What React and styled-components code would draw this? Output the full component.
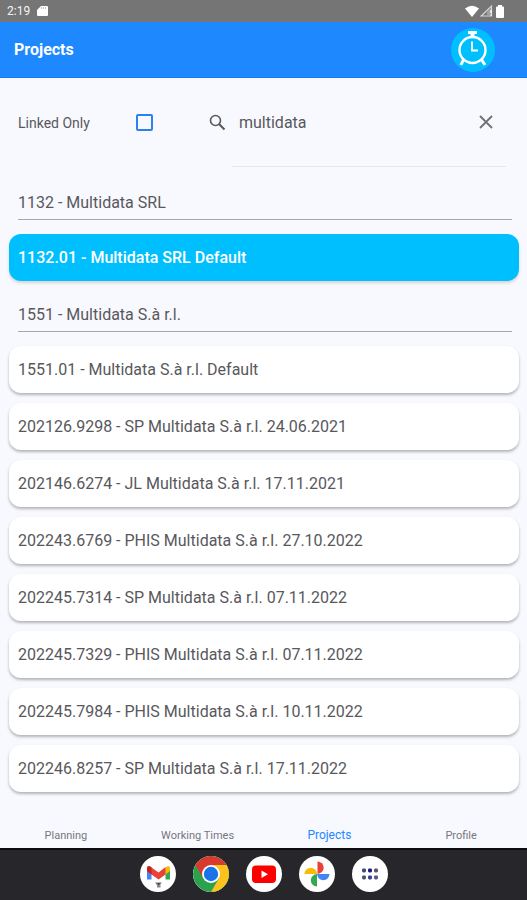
import React, { useState } from "react";
import styled, { createGlobalStyle } from "styled-components";

const GlobalStyle = createGlobalStyle`
  * { box-sizing: border-box; }
  body {
    margin: 0;
    background: #f8f9ff;
    color: #58585c;
    font-family: Roboto, "Liberation Sans", sans-serif;
    font-size: 16px;
  }
  button, input { font: inherit; color: inherit; }
`;

const Page = styled.div`
  display: flex;
  flex-direction: column;
  min-height: 100vh;
`;

const StatusBar = styled.div`
  display: flex;
  align-items: center;
  gap: 7px;
  height: 22px;
  padding: 0 22px 0 7px;
  background: #757575;
  color: #f4f4f4;
  font-size: 12px;
`;

const StatusIcons = styled.div`
  display: flex;
  align-items: center;
  gap: 1px;
  margin-left: auto;
`;

const AppBar = styled.header`
  display: flex;
  align-items: center;
  justify-content: space-between;
  height: 56px;
  padding: 0 32px 0 14px;
  background: #1e88ff;
  border-bottom: 1px solid #0f7df5;
  color: #fff;
`;

const Title = styled.h1`
  margin: 0;
  font-size: 16px;
  line-height: 20px;
  font-weight: 700;
`;

const ClockButton = styled.button`
  display: grid;
  place-items: center;
  width: 44px;
  height: 44px;
  padding: 0;
  border: 0;
  border-radius: 50%;
  background: #00bfff;
  color: #fff;
`;

const Filters = styled.div`
  display: flex;
  align-items: flex-start;
  padding: 0 21px 12px 18px;
`;

const LinkedLabel = styled.label`
  display: flex;
  align-items: center;
  justify-content: space-between;
  width: 135px;
  height: 89px;
  font-size: 14px;
`;

const CheckBox = styled.input`
  appearance: none;
  width: 17px;
  height: 17px;
  margin: 0;
  border: 2px solid #2f7fee;
  border-radius: 2px;
  background: #f8f9ff;
  &:checked { background: #2f7fee; }
`;

const SearchField = styled.label`
  display: flex;
  flex: 1;
  align-items: flex-start;
  gap: 6px;
  margin-left: 56px;
  min-width: 0;

  > svg { margin-top: 36px; }
`;

const SearchBox = styled.span`
  display: flex;
  flex: 1;
  align-items: center;
  min-width: 0;
  height: 89px;
  padding: 0 11px 0 7px;
  border-bottom: 1px solid #e4e6ec;
`;

const SearchInput = styled.input`
  flex: 1;
  min-width: 0;
  padding: 0;
  border: 0;
  outline: 0;
  background: transparent;
`;

const ClearButton = styled.button`
  display: grid;
  place-items: center;
  width: 18px;
  height: 18px;
  padding: 0;
  border: 0;
  background: transparent;
  color: #707074;
`;

const ProjectList = styled.main`
  display: flex;
  flex: 1;
  flex-direction: column;
  gap: 10px;
  padding: 0 8px 28px 9px;
`;

const GroupHeading = styled.h2`
  margin: 0 7px 4px 9px;
  padding: 14px 0 6px;
  border-bottom: 1px solid #a6a8ad;
  font-size: 16px;
  line-height: 20px;
  font-weight: 400;
`;

const ProjectCard = styled.button`
  height: 47px;
  padding: 0 9px;
  border: 0;
  border-radius: 12px;
  background: ${(p) => (p.$active ? "#00bfff" : "#fff")};
  color: ${(p) => (p.$active ? "#fff" : "inherit")};
  font-weight: ${(p) => (p.$active ? 500 : 400)};
  text-align: left;
  box-shadow: 0 2px 3px ${(p) => (p.$active ? "#00000026" : "#00000047")};
`;

const Tabs = styled.nav`
  display: grid;
  grid-template-columns: repeat(4, 1fr);
  height: 26px;
`;

const Tab = styled.a`
  display: grid;
  place-items: center;
  color: ${(p) => (p.$active ? "#1e88ff" : "#77777b")};
  font-size: ${(p) => (p.$active ? "12px" : "11px")};
  text-decoration: none;
`;

const Dock = styled.div`
  display: flex;
  align-items: center;
  justify-content: center;
  gap: 17px;
  height: 52px;
  background: #26262b;
  box-shadow: inset 0 2px #0c0c10;
`;

const DockButton = styled.button`
  display: grid;
  place-items: center;
  width: 36px;
  height: 36px;
  padding: 0;
  border: 0;
  border-radius: 50%;
  background: #fff;
  overflow: hidden;
`;

const SdCard = () => (
  <svg width="11" height="12" viewBox="0 0 11 12" aria-hidden="true">
    <path d="M4 1h6q1 0 1 1v8q0 1-1 1H1q-1 0-1-1V5z" fill="#fff" />
    <path d="M4.5 2v2M6.5 2v2M8.5 2v2" stroke="#a8a8a8" strokeWidth=".7" />
  </svg>
);

const Wifi = () => (
  <svg width="14" height="12" viewBox="0 0 14 12" aria-hidden="true">
    <path d="M0 3.4Q7-2 14 3.4L7 12z" fill="#fff" />
  </svg>
);

const Signal = () => (
  <svg width="13" height="12" viewBox="0 0 13 12" aria-hidden="true">
    <path d="M1.2 11 11.5 1v10z" fill="none" stroke="#d6d6d6" strokeWidth="1.2" />
    <path d="M7 7v4h4V2z" fill="#a2a2a2" />
    <path d="M11 5v3M11 9.5v1.3" stroke="#fff" strokeWidth="1.3" />
  </svg>
);

const Battery = () => (
  <svg width="11" height="13" viewBox="0 0 11 13" aria-hidden="true">
    <path d="M4 0h4v1.500h1q1 0 1 1V12q0 1-1 1H3q-1 0-1-1V2.500q0-1 1-1h1z" fill="#fff" />
  </svg>
);

const AlarmClock = () => (
  <svg width="44" height="44" viewBox="0 0 44 44" fill="none" stroke="#fff" aria-hidden="true">
    <circle cx="21.500" cy="22" r="13" strokeWidth="2.400" />
    <path d="M17 4.500h9" strokeWidth="3" />
    <path d="M21.500 4v5" strokeWidth="4" />
    <path d="M12.500 31.500 10 37M30.500 31.500l3.500 5.500" strokeWidth="3" />
    <path d="M21 13.500v9h6" strokeWidth="1.800" />
  </svg>
);

const Magnifier = () => (
  <svg width="17" height="17" viewBox="0 0 17 17" fill="none" stroke="#58585c" aria-hidden="true">
    <circle cx="6.500" cy="6.500" r="5" strokeWidth="1.600" />
    <path d="m10.200 10.200 5.300 5.300" strokeWidth="2" />
  </svg>
);

const Cross = () => (
  <svg width="14" height="14" viewBox="0 0 14 14" stroke="currentColor" strokeWidth="1.800" aria-hidden="true">
    <path d="m1 1 12 12M13 1 1 13" />
  </svg>
);

const Gmail = () => (
  <svg width="36" height="36" viewBox="0 0 36 36" aria-hidden="true">
    <path d="M7 12v11.500h4.500V13z" fill="#4285f4" />
    <path d="M25.500 13v10.500H30V12z" fill="#34a853" />
    <path d="M25.500 11.500 28 10q2 0 2 2v3l-4.500 3.500z" fill="#fbbc04" />
    <path d="M7 12q0-2 2.500-2l9 6.500 7-5.500v7.500l-7 5-7-5L7 15z" fill="#ea4335" />
    <path d="M7 12q0-2 2.500-2l2 1.500v7L7 15z" fill="#c5221f" />
    <path d="m15.500 26 3 1 3-1-.5 2.500h-5zM17 29h3.500v2.500H17z" fill="#88888c" />
    <path d="M17.500 26.800h2.200v2h-2.200z" fill="#333" />
  </svg>
);

const Chrome = () => (
  <svg width="36" height="36" viewBox="0 0 36 36" aria-hidden="true">
    <circle cx="18" cy="18" r="18" fill="#2ba24c" />
    <path d="M2.400 9A18 18 0 0 1 33.600 9H18l-7.800 13.500z" fill="#d93a2f" />
    <path d="M18 9h15.600A18 18 0 0 1 18 36l7.800-13.500z" fill="#fcc31e" />
    <circle cx="18" cy="18" r="9" fill="#fff" />
    <circle cx="18" cy="18" r="7.200" fill="#1a73e8" />
  </svg>
);

const YouTube = () => (
  <svg width="36" height="36" viewBox="0 0 36 36" aria-hidden="true">
    <rect x="6" y="9.500" width="24" height="17.500" rx="4" fill="#f00" />
    <path d="m15.500 14.500 6.500 3.700-6.500 3.800z" fill="#fff" />
  </svg>
);

const Photos = () => (
  <svg width="36" height="36" viewBox="0 0 36 36" aria-hidden="true">
    <path d="M18.500 5.500a6.200 6.200 0 0 1 0 12.400z" fill="#ea4335" />
    <path d="M30.500 18a6.200 6.200 0 0 1-12.400 0z" fill="#4285f4" />
    <path d="M18 30.500a6.200 6.200 0 0 1 0-12.400z" fill="#34a853" />
    <path d="M5.500 18a6.200 6.200 0 0 1 12.400 0z" fill="#fbbc04" />
  </svg>
);

const Apps = () => (
  <svg width="36" height="36" viewBox="0 0 36 36" aria-hidden="true">
    {[["#3c4a84", "#1c1884", "#62506e"], ["#4c5470", "#3a3f8e", "#5b5884"]].map((row, y) =>
      row.map((fill, x) => (
        <rect key={`${x}-${y}`} x={10 + x * 6} y={12.5 + y * 7} width="4" height="4" rx="1.400" fill={fill} />
      ))
    )}
  </svg>
);

const groups = [
  { name: "1132 - Multidata SRL", projects: ["1132.01 - Multidata SRL Default"] },
  {
    name: "1551 - Multidata S.à r.l.",
    projects: [
      "1551.01 - Multidata S.à r.l. Default",
      "202126.9298 - SP Multidata S.à r.l. 24.06.2021",
      "202146.6274 - JL Multidata S.à r.l. 17.11.2021",
      "202243.6769 - PHIS Multidata S.à r.l. 27.10.2022",
      "202245.7314 - SP Multidata S.à r.l. 07.11.2022",
      "202245.7329 - PHIS Multidata S.à r.l. 07.11.2022",
      "202245.7984 - PHIS Multidata S.à r.l. 10.11.2022",
      "202246.8257 - SP Multidata S.à r.l. 17.11.2022",
    ],
  },
];

const tabs = ["Planning", "Working Times", "Projects", "Profile"];

const dockApps = [
  ["Gmail", Gmail],
  ["Chrome", Chrome],
  ["YouTube", YouTube],
  ["Photos", Photos],
  ["All apps", Apps],
];

export default function App() {
  const [query, setQuery] = useState("multidata");
  const [selected, setSelected] = useState(groups[0].projects[0]);

  return (
    <Page>
      <GlobalStyle />
      <StatusBar>
        <span>2:19</span>
        <SdCard />
        <StatusIcons>
          <Wifi />
          <Signal />
          <Battery />
        </StatusIcons>
      </StatusBar>
      <AppBar>
        <Title>Projects</Title>
        <ClockButton type="button" aria-label="Track time">
          <AlarmClock />
        </ClockButton>
      </AppBar>
      <Filters>
        <LinkedLabel>
          Linked Only
          <CheckBox type="checkbox" />
        </LinkedLabel>
        <SearchField>
          <Magnifier />
          <SearchBox>
            <SearchInput
              type="text"
              aria-label="Search projects"
              value={query}
              onChange={(e) => setQuery(e.target.value)}
            />
            <ClearButton type="button" aria-label="Clear search" onClick={() => setQuery("")}>
              <Cross />
            </ClearButton>
          </SearchBox>
        </SearchField>
      </Filters>
      <ProjectList>
        {groups.map((group) => (
          <React.Fragment key={group.name}>
            <GroupHeading>{group.name}</GroupHeading>
            {group.projects.map((name) => (
              <ProjectCard
                key={name}
                type="button"
                aria-pressed={name === selected}
                $active={name === selected}
                onClick={() => setSelected(name)}
              >
                {name}
              </ProjectCard>
            ))}
          </React.Fragment>
        ))}
      </ProjectList>
      <Tabs>
        {tabs.map((tab) => (
          <Tab
            key={tab}
            href={`#${tab.toLowerCase().replace(" ", "-")}`}
            $active={tab === "Projects"}
            aria-current={tab === "Projects" ? "page" : undefined}
          >
            {tab}
          </Tab>
        ))}
      </Tabs>
      <Dock>
        {dockApps.map(([label, Icon]) => (
          <DockButton key={label} type="button" aria-label={label}>
            <Icon />
          </DockButton>
        ))}
      </Dock>
    </Page>
  );
}
